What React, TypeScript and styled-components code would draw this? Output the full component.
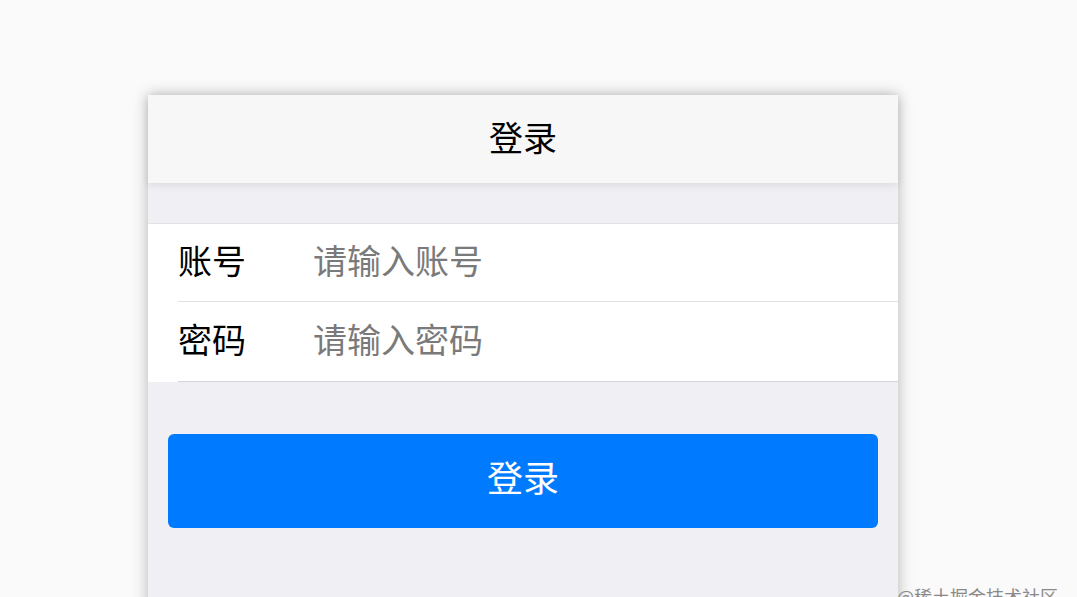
import styled, { createGlobalStyle } from 'styled-components';

const GlobalStyle = createGlobalStyle`
  html, body {
    margin: 0;
    padding: 0;
    background: #fafafa;
    overflow: hidden;
    font-family: "Noto Sans CJK SC", "Noto Sans", sans-serif;
  }
`;

const Page = styled.div`
  position: relative;
  height: 597px;
  padding-top: 95px;
  box-sizing: border-box;
  display: flex;
  justify-content: flex-start;
  padding-left: 148px;
  overflow: hidden;
`;

const Card = styled.div`
  width: 750px;
  min-height: 560px;
  background: #efeff4;
  box-shadow: 0 0 14px rgba(0, 0, 0, 0.28);
  display: flex;
  flex-direction: column;
`;

const Header = styled.div`
  height: 88px;
  box-sizing: border-box;
  padding-bottom: 6px;
  background: #f7f7f7;
  display: flex;
  align-items: center;
  justify-content: center;
  font-size: 34px;
  color: #000;
  box-shadow: 0 2px 8px rgba(0, 0, 0, 0.09);
  position: relative;
  z-index: 1;
`;

const Form = styled.div`
  margin-top: 40px;
  background: #fff;
  border-top: 1px solid #e3e3e6;
  display: flex;
  flex-direction: column;
`;

const Row = styled.label<{ last?: boolean }>`
  height: ${({ last }) => (last ? '80px' : '78px')};
  box-sizing: border-box;
  padding-bottom: 6px;
  margin-left: 30px;
  display: flex;
  align-items: center;
  border-bottom: 1px solid ${({ last }) => (last ? '#d4d4d8' : '#e0e0e3')};
`;

const Label = styled.span`
  width: 135px;
  flex-shrink: 0;
  font-size: 34px;
  color: #000;
`;

const Input = styled.input`
  flex: 1;
  border: none;
  outline: none;
  background: transparent;
  padding: 0;
  font-family: inherit;
  font-size: 34px;
  color: #000;

  &::placeholder {
    color: #7a7a7a;
  }
`;

const Button = styled.button`
  margin: 52px 20px 0;
  height: 94px;
  padding: 0 0 10px;
  border: none;
  border-radius: 6px;
  background: #007aff;
  color: #fff;
  font-family: inherit;
  font-size: 36px;
  cursor: pointer;
`;

const Watermark = styled.div`
  position: absolute;
  left: 897px;
  top: 583px;
  font-size: 18px;
  color: #8a8a8a;
  white-space: nowrap;
`;

const App = () => {
  return (
    <>
      <GlobalStyle />
      <Page>
        <Card>
          <Header>登录</Header>
          <Form>
            <Row>
              <Label>账号</Label>
              <Input placeholder="请输入账号" />
            </Row>
            <Row last>
              <Label>密码</Label>
              <Input type="password" placeholder="请输入密码" />
            </Row>
          </Form>
          <Button>登录</Button>
        </Card>
        <Watermark>@稀土掘金技术社区</Watermark>
      </Page>
    </>
  );
};

export default App;
